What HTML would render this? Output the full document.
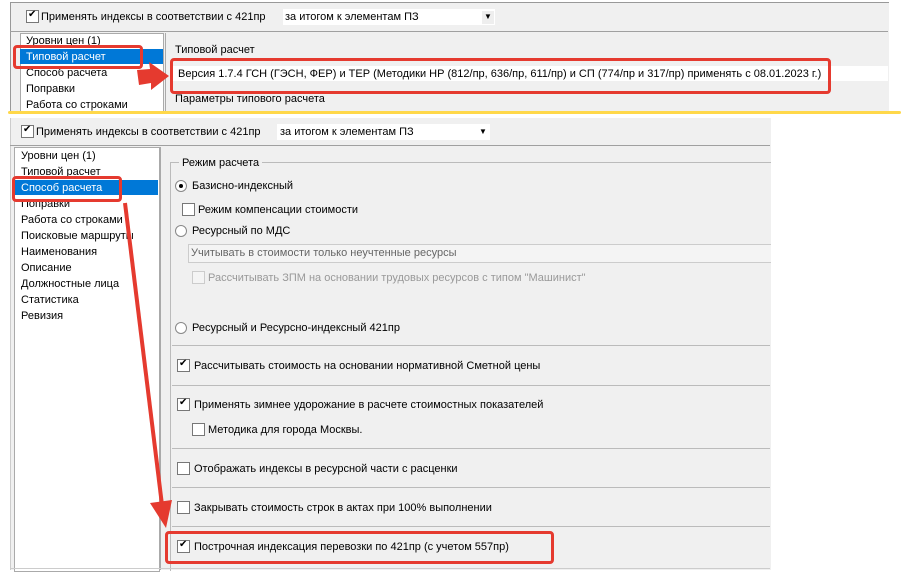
<html><head><style>
body{margin:0;width:914px;height:570px;background:#fff;position:relative;overflow:hidden;font-family:"Liberation Sans",sans-serif;font-size:11px;color:#000}
.a{position:absolute}
.t{position:absolute;white-space:nowrap;margin-top:1px}
.cb{position:absolute;width:11px;height:11px;border:1px solid #777;background:#fff}
.cb.k::after{content:"✔";position:absolute;left:1px;top:-2px;font-size:10px}
.cb.d{border-color:#ccc;background:#f4f4f4}
.rd{position:absolute;width:10px;height:10px;border:1px solid #888;border-radius:50%;background:#fff}
.rd.k::after{content:"";position:absolute;left:3px;top:3px;width:4px;height:4px;border-radius:50%;background:#000}
.hl{position:absolute;height:1px;background:#a0a0a0}
.red{position:absolute;border:3px solid #e53a2f;border-radius:4px}
</style></head><body>
<div class="a" style="left:10px;top:2px;width:878px;height:108px;background:#f0f0f0;border-top:1px solid #999;border-left:1px solid #999"></div>
<div class="cb k" style="left:26px;top:10px"></div>
<div class="t" style="left:41px;top:10px">Применять индексы в соответствии с 421пр</div>
<div class="a" style="left:283px;top:9px;width:212px;height:16px;background:#fff"></div>
<div class="t" style="left:285px;top:10px">за итогом к элементам ПЗ</div>
<div class="a" style="left:482px;top:11px;width:12px;height:13px;background:#eee"></div>
<div class="t" style="left:484px;top:11px;font-size:8px">▼</div>
<div class="hl" style="left:10px;top:31px;width:878px"></div>
<div class="a" style="left:20px;top:33px;width:142px;height:78px;background:#fff;border:1px solid #aaa;border-bottom:none"></div>
<div class="a" style="left:20px;top:49px;width:143px;height:15px;background:#0078d7"></div>
<div class="t" style="left:26px;top:34px">Уровни цен (1)</div>
<div class="t" style="left:26px;top:50px;color:#fff">Типовой расчет</div>
<div class="t" style="left:26px;top:66px">Способ расчета</div>
<div class="t" style="left:26px;top:82px">Поправки</div>
<div class="t" style="left:26px;top:98px">Работа со строками</div>
<div class="a" style="left:165px;top:33px;width:1px;height:78px;background:#aaa"></div>
<div class="t" style="left:175px;top:43px">Типовой расчет</div>
<div class="a" style="left:172px;top:66px;width:716px;height:15px;background:#fff"></div>
<div class="t" style="left:178px;top:67px">Версия 1.7.4 ГСН (ГЭСН, ФЕР) и ТЕР (Методики НР (812/пр, 636/пр, 611/пр) и СП (774/пр и 317/пр) применять с 08.01.2023 г.)</div>
<div class="t" style="left:175px;top:92px">Параметры типового расчета</div>
<div class="red" style="left:13px;top:45px;width:124px;height:18px"></div>
<div class="red" style="left:170px;top:58px;width:655px;height:30px"></div>
<div class="a" style="left:8px;top:111px;width:893px;height:3px;background:#ffd84a;border-radius:2px"></div>
<div class="a" style="left:10px;top:118px;width:760px;height:452px;background:#f0f0f0;border-left:1px solid #ccc"></div>
<div class="cb k" style="left:21px;top:125px"></div>
<div class="t" style="left:36px;top:125px">Применять индексы в соответствии с 421пр</div>
<div class="a" style="left:277px;top:124px;width:213px;height:16px;background:#fff"></div>
<div class="t" style="left:280px;top:125px">за итогом к элементам ПЗ</div>
<div class="t" style="left:479px;top:126px;font-size:8px">▼</div>
<div class="hl" style="left:10px;top:145px;width:760px"></div>
<div class="a" style="left:14px;top:147px;width:144px;height:423px;background:#fff;border:1px solid #aaa"></div>
<div class="a" style="left:15px;top:180px;width:143px;height:15px;background:#0078d7"></div>
<div class="t" style="left:21px;top:149px">Уровни цен (1)</div>
<div class="t" style="left:21px;top:165px">Типовой расчет</div>
<div class="t" style="left:21px;top:181px;color:#fff">Способ расчета</div>
<div class="t" style="left:21px;top:197px">Поправки</div>
<div class="t" style="left:21px;top:213px">Работа со строками</div>
<div class="t" style="left:21px;top:229px">Поисковые маршруты</div>
<div class="t" style="left:21px;top:245px">Наименования</div>
<div class="t" style="left:21px;top:261px">Описание</div>
<div class="t" style="left:21px;top:277px">Должностные лица</div>
<div class="t" style="left:21px;top:293px">Статистика</div>
<div class="t" style="left:21px;top:309px">Ревизия</div>
<div class="a" style="left:160px;top:147px;width:1px;height:423px;background:#aaa"></div>
<div class="a" style="left:170px;top:162px;width:600px;height:408px;border-left:1px solid #bbb;border-top:1px solid #bbb"></div>
<div class="t" style="left:179px;top:156px;background:#f0f0f0;padding:0 3px">Режим расчета</div>
<div class="rd k" style="left:175px;top:180px"></div>
<div class="t" style="left:192px;top:179px">Базисно-индексный</div>
<div class="cb" style="left:182px;top:203px"></div>
<div class="t" style="left:198px;top:203px">Режим компенсации стоимости</div>
<div class="rd" style="left:175px;top:225px"></div>
<div class="t" style="left:192px;top:224px">Ресурсный по МДС</div>
<div class="a" style="left:188px;top:244px;width:582px;height:17px;background:#f4f4f4;border:1px solid #ccc;border-right:none"></div>
<div class="t" style="left:191px;top:246px;color:#666">Учитывать в стоимости только неучтенные ресурсы</div>
<div class="cb d" style="left:192px;top:271px"></div>
<div class="t" style="left:208px;top:271px;color:#999">Рассчитывать ЗПМ на основании трудовых ресурсов с типом "Машинист"</div>
<div class="rd" style="left:175px;top:322px"></div>
<div class="t" style="left:192px;top:321px">Ресурсный и Ресурсно-индексный 421пр</div>
<div class="hl" style="left:172px;top:345px;width:598px;background:#bbb"></div>
<div class="cb k" style="left:177px;top:359px"></div>
<div class="t" style="left:194px;top:359px">Рассчитывать стоимость на основании нормативной Сметной цены</div>
<div class="hl" style="left:172px;top:385px;width:598px;background:#bbb"></div>
<div class="cb k" style="left:177px;top:398px"></div>
<div class="t" style="left:194px;top:398px">Применять зимнее удорожание в расчете стоимостных показателей</div>
<div class="cb" style="left:192px;top:423px"></div>
<div class="t" style="left:208px;top:423px">Методика для города Москвы.</div>
<div class="hl" style="left:172px;top:448px;width:598px;background:#bbb"></div>
<div class="cb" style="left:177px;top:462px"></div>
<div class="t" style="left:194px;top:462px">Отображать индексы в ресурсной части с расценки</div>
<div class="hl" style="left:172px;top:487px;width:598px;background:#bbb"></div>
<div class="cb" style="left:177px;top:501px"></div>
<div class="t" style="left:194px;top:501px">Закрывать стоимость строк в актах при 100% выполнении</div>
<div class="hl" style="left:172px;top:526px;width:598px;background:#bbb"></div>
<div class="cb k" style="left:177px;top:540px"></div>
<div class="t" style="left:194px;top:540px">Построчная индексация перевозки по 421пр (с учетом 557пр)</div>
<div class="hl" style="left:10px;top:568px;width:760px;background:#ccc"></div>
<div class="red" style="left:12px;top:176px;width:104px;height:20px"></div>
<div class="red" style="left:165px;top:531px;width:383px;height:27px"></div>
<svg class="a" style="left:0;top:0" width="914" height="570">
<polygon points="137,70 150,69 149,62 169,76 151,90 151,83 139,85" fill="#e53a2f"/>
<line x1="125" y1="203" x2="162" y2="505" stroke="#e53a2f" stroke-width="4"/>
<polygon points="150,503 172,500 166,528" fill="#e53a2f"/>
</svg>
</body></html>
